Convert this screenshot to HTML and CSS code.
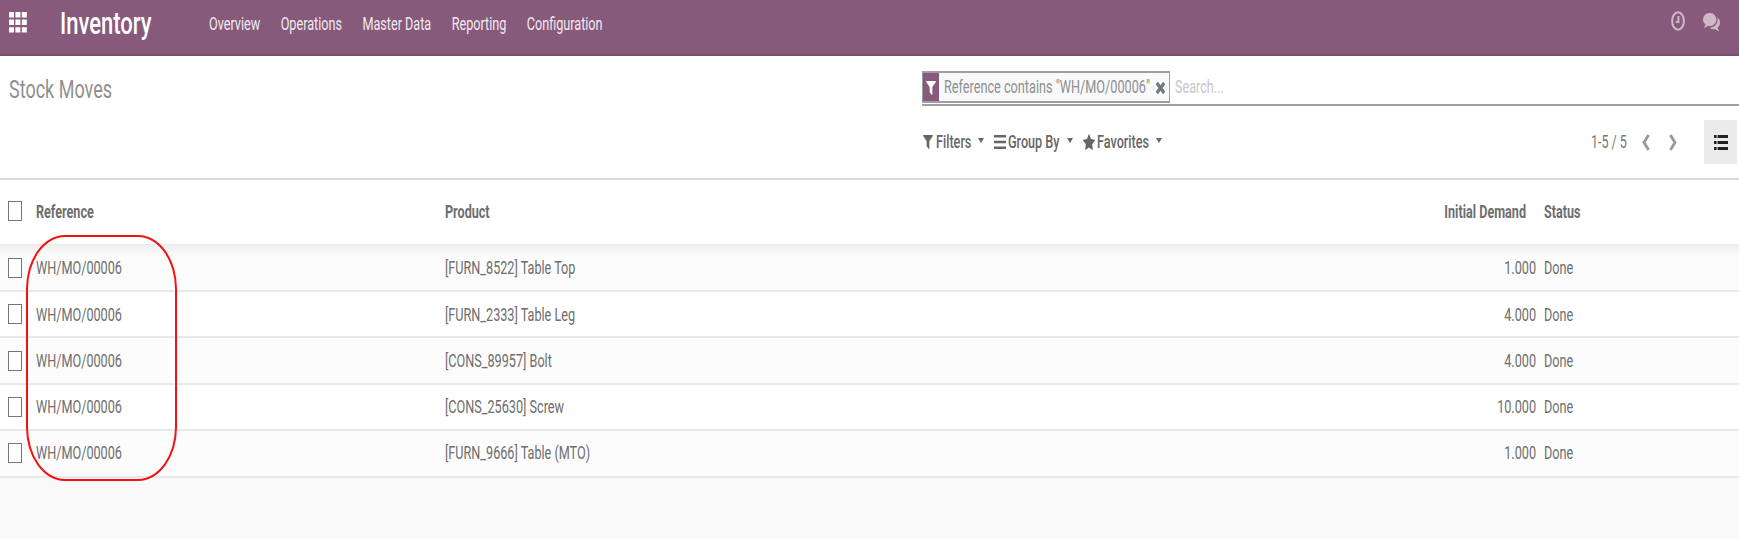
FILE: index.html
```html
<!DOCTYPE html>
<html lang="en">
<head>
<meta charset="utf-8">
<title>Stock Moves</title>
<link rel="stylesheet" href="styles.css">
</head>
<body>
<nav class="navbar">
  <svg class="apps" viewBox="0 0 18 21" preserveAspectRatio="none"><path d="M0 0h5v5.400H0zM6.400 0h5v5.400h-5zM12.800 0h5v5.400h-5zM0 7.600h5V13H0zM6.400 7.600h5V13h-5zM12.800 7.600h5V13h-5zM0 15.200h5v5.400H0zM6.400 15.200h5v5.400h-5zM12.800 15.200h5v5.400h-5z"/></svg>
  <span class="brand t">Inventory</span>
  <div class="menu">
    <span class="t">Overview</span><span class="t">Operations</span><span class="t">Master Data</span><span class="t">Reporting</span><span class="t">Configuration</span>
  </div>
  <div class="systray">
    <svg class="clock" viewBox="0 0 14 20" preserveAspectRatio="none"><ellipse cx="7" cy="10" rx="5.900" ry="8.700"/><path d="M7.400 5v6H4.800"/></svg>
    <svg class="chat" viewBox="0 256 1792 1416" preserveAspectRatio="none"><path d="M1408 768q0 139-94 257t-256.500 186.500-353.500 68.500q-86 0-176-16-124 88-278 128-36 9-86 16h-3q-11 0-20.500-8t-11.500-21q-1-3-1-6.500t.5-6.500 2-6l2.500-5 3.500-5.500 4-5 4.500-5 4-4.500q5-6 23-25t26-29.500 22.500-29 25-38.500 20.500-44q-124-72-195-177t-71-224q0-139 94-257t256.500-186.500 353.500-68.500 353.500 68.500 256.500 186.500 94 257zm384 256q0 120-71 224.500t-195 176.500q10 24 20.500 44t25 38.500 22.500 29 26 29.500 23 25q1 1 4 4.500t4.500 5 4 5 3.500 5.500l2.500 5 2 6 .5 6.500-1 6.500q-3 14-13 22t-22 7q-50-7-86-16-154-40-278-128-90 16-176 16-271 0-472-132 58 4 88 4 161 0 309-45t264-129q125-92 192-212t67-254q0-77-23-152 129 71 204 178t75 230z"/></svg>
  </div>
</nav>
<header class="panel">
  <h1 class="title t">Stock Moves</h1>
  <div class="tools">
    <div class="search">
      <div class="facet">
        <span class="facet-icon"><svg viewBox="190 256 1412 1410" preserveAspectRatio="none"><path d="M1595 295q17 41-14 70l-493 493v742q0 42-39 59-13 5-25 5-27 0-45-19l-256-256q-19-19-19-45v-486l-493-493q-31-29-14-70 17-39 59-39h1280q42 0 59 39z"/></svg></span>
        <span class="facet-text t">Reference contains "WH/MO/00006"</span>
        <svg class="remove" viewBox="302 366 1188 1188" preserveAspectRatio="none"><path d="M1490 1322q0 40-28 68l-136 136q-28 28-68 28t-68-28l-294-294-294 294q-28 28-68 28t-68-28l-136-136q-28-28-28-68t28-68l294-294-294-294q-28-28-28-68t28-68l136-136q28-28 68-28t68 28l294 294 294-294q28-28 68-28t68 28l136 136q28 28 28 68t-28 68l-294 294 294 294q28 28 28 68z"/></svg>
      </div>
      <span class="placeholder t">Search...</span>
    </div>
    <div class="options">
      <div class="option filters"><svg class="i-filter" viewBox="190 256 1412 1410" preserveAspectRatio="none"><path d="M1595 295q17 41-14 70l-493 493v742q0 42-39 59-13 5-25 5-27 0-45-19l-256-256q-19-19-19-45v-486l-493-493q-31-29-14-70 17-39 59-39h1280q42 0 59 39z"/></svg><span class="t">Filters</span><i class="caret"></i></div>
      <div class="option group"><svg class="i-bars" viewBox="0 0 12 14" preserveAspectRatio="none"><path d="M0 0h12v2.600H0zM0 5.700h12v2.600H0zM0 11.400h12V14H0z"/></svg><span class="t">Group By</span><i class="caret"></i></div>
      <div class="option favorites"><svg class="i-star" viewBox="64 32 1664 1588" preserveAspectRatio="none"><path d="M1728 647q0 22-26 48l-363 354 86 500q1 7 1 20 0 21-10.500 35.500t-30.500 14.500q-19 0-40-12l-449-236-449 236q-22 12-40 12-21 0-31.500-14.500t-10.500-35.500q0-6 2-20l86-500-364-354q-25-27-25-48 0-37 56-46l502-73 225-455q19-41 49-41t49 41l225 455 502 73q56 9 56 46z"/></svg><span class="t">Favorites</span><i class="caret"></i></div>
      <div class="pager">
        <span class="count t">1-5 / 5</span>
        <svg class="chev" viewBox="0 0 8 17"><path d="M6.600 1 2 8.500 6.600 16"/></svg>
        <svg class="chev" viewBox="0 0 8 17"><path d="M1.400 1 6 8.500 1.400 16"/></svg>
        <span class="view"><svg viewBox="0 0 14 15"><path d="M0 0h2.600v3H0zM3.600 .1h10.400v2.800H3.600zM0 6h2.600v3H0zM3.600 6.100h10.400v2.800H3.600zM0 12h2.600v3H0zM3.600 12.100h10.400v2.800H3.600z"/></svg></span>
      </div>
    </div>
  </div>
</header>
<main class="list">
  <div class="row head"><i class="check"></i><span><b class="t">Reference</b></span><span><b class="t">Product</b></span><span class="num"><b class="t">Initial Demand</b></span><span><b class="t">Status</b></span></div>
  <div class="row"><i class="check"></i><span><b class="t">WH/MO/00006</b></span><span><b class="t">[FURN_8522] Table Top</b></span><span class="num"><b class="t">1.000</b></span><span><b class="t">Done</b></span></div>
  <div class="row"><i class="check"></i><span><b class="t">WH/MO/00006</b></span><span><b class="t">[FURN_2333] Table Leg</b></span><span class="num"><b class="t">4.000</b></span><span><b class="t">Done</b></span></div>
  <div class="row"><i class="check"></i><span><b class="t">WH/MO/00006</b></span><span><b class="t">[CONS_89957] Bolt</b></span><span class="num"><b class="t">4.000</b></span><span><b class="t">Done</b></span></div>
  <div class="row"><i class="check"></i><span><b class="t">WH/MO/00006</b></span><span><b class="t">[CONS_25630] Screw</b></span><span class="num"><b class="t">10.000</b></span><span><b class="t">Done</b></span></div>
  <div class="row"><i class="check"></i><span><b class="t">WH/MO/00006</b></span><span><b class="t">[FURN_9666] Table (MTO)</b></span><span class="num"><b class="t">1.000</b></span><span><b class="t">Done</b></span></div>
  <div class="highlight"></div>
</main>
</body>
</html>
```
FILE: styles.css
```css
* { box-sizing: border-box; }
body {
  margin: 0;
  height: 539px;
  overflow: hidden;
  background: #f9f9f9;
  color: #6e6e6e;
  font: 12.65px/18px Roboto, sans-serif;
}
svg { display: block; flex: none; }
/* Condensed look: glyphs keep their width and grow in height */
.t {
  display: inline-block;
  white-space: nowrap;
  transform: scaleY(1.44);
  flex: none;
}
.navbar {
  display: flex;
  align-items: center;
  height: 56px;
  padding: 0 19px 8px 9px;
  background: #875a7b;
  border-bottom: 2px solid #77526d;
  color: #f0eaee;
}
.apps { width: 18px; height: 21px; margin-top: -1px; fill: #fff; }
.brand { margin: 2px 0 0 33px; width: 149px; font-size: 22px; line-height: 24px; font-weight: 500; color: #fff; }
.menu { display: flex; gap: 20.400px; padding-top: 2px; }
.systray { display: flex; align-items: center; gap: 19px; margin-left: auto; margin-top: -4px; }
.clock { width: 14px; height: 20px; margin-right: -1px; fill: none; stroke: #cdb9c8; stroke-width: 2; }
.chat { width: 17px; height: 18px; margin-top: 1px; fill: #cdb9c8; }

.panel {
  display: flex;
  justify-content: space-between;
  height: 124px;
  padding-left: 9px;
  background: #fff;
  border-bottom: 2px solid #d9d9d9;
}
.title { margin: 21px 0 0; height: 24px; font-size: 18px; line-height: 24px; font-weight: 400; color: #8f8f8f; }
.tools { width: 817px; }
.search { display: flex; align-items: center; height: 50px; padding: 15px 0 2px; border-bottom: 2px solid #a0a0a0; }
.facet { display: flex; align-items: center; width: 248px; height: 32px; border: 2px solid #9c9fa1; border-width: 2px 1px; background: #f7f9fa; margin-right: 5px; }
.facet-icon { display: grid; place-items: center; width: 16px; height: 28px; background: #875a7b; }
.facet-icon svg { width: 10px; height: 14px; fill: #fff; margin-top: 3px; }
.facet-text { margin-left: 5px; width: 212px; font-size: 12.700px; color: #8f8f8f; }
.remove { width: 9px; height: 12px; fill: #777; margin-top: 3px; }
.placeholder { color: #c8c8c8; }
.options { display: flex; align-items: center; height: 44px; margin-top: 14px; color: #666; }
.option { display: flex; align-items: center; flex: none; font-weight: 500; }
.option svg { fill: #666; }
.filters { width: 72px; padding-left: 1px; }
.group { width: 89px; }
.i-filter { width: 10px; height: 14px; margin-right: 3px; }
.i-bars { width: 12px; height: 14px; margin-right: 2px; }
.i-star { width: 12px; height: 16px; margin-right: 2px; }
.caret { margin: -4px 0 0 7px; border: 3px solid transparent; border-top: 5px solid #666; border-bottom: 0; }
.pager { display: flex; align-items: center; margin-left: auto; padding-right: 2px; color: #777; }
.count { width: 51px; font-size: 12.500px; }
.chev { width: 8px; height: 17px; margin-right: 19px; fill: none; stroke: #999; stroke-width: 2.800; }
.view { display: grid; place-items: center; width: 33px; height: 44px; margin-left: 8px; background: #ebebeb; }
.view svg { width: 14px; height: 15px; fill: #222; }

.list { position: relative; }
.row {
  display: grid;
  grid-template-columns: 28px 409px 800px 291px 1fr;
  align-items: center;
  height: 47px;
  padding-left: 8px;
  border-bottom: 2px solid #e6e9ed;
  background: #fff;
}
.row:nth-child(even) { background: #fcfcfc; }
.row:nth-child(3), .row:nth-child(5) { height: 46px; }
.row:nth-child(3) { padding-top: 1px; }
.row:nth-child(6) { padding-bottom: 2px; }
.row b { font-weight: 400; }
.row.head { height: 65px; border-bottom-width: 1px; }
.row.head b { font-weight: 700; font-size: 12.600px; }
.row.head + .row { background: linear-gradient(#efefef, #fcfcfc 12px); }
.num { text-align: right; }
.row > span:last-child { padding-left: 8px; }
.row.head .num { padding-right: 10px; }
.check { width: 14px; height: 20px; border: 1px solid #767676; background: #fff; }
.head .check, .row:nth-child(3) .check { margin-bottom: 2px; }
.highlight {
  position: absolute;
  left: 26px;
  top: 55px;
  width: 151px;
  height: 246px;
  border: 2px solid #f80f0f;
  border-radius: 39px / 54px;
}
```
